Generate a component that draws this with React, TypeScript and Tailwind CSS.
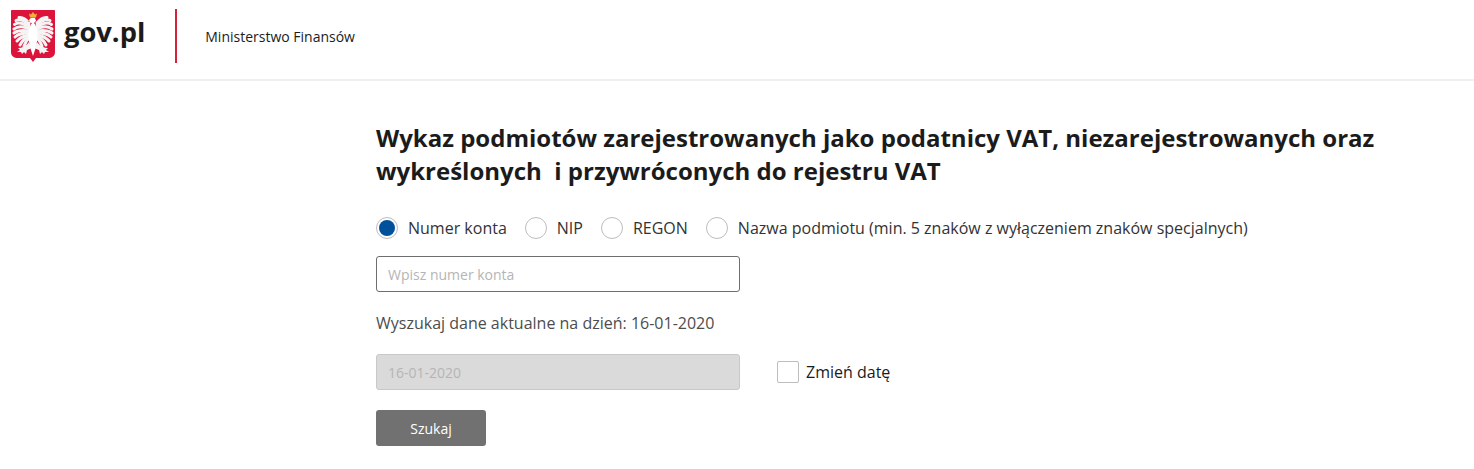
import React from "react";

// wing feathers, drawn from the shoulder outwards (left wing, the right one is mirrored)
const feathers = [
  "M18 13C14 8 11 7 8 7.500",
  "M18 15C13 10 8 9 5 10.500",
  "M18 17C12 13 7 12 3.500 14.500",
  "M18 19C12 16 7 16 3 19",
  "M18 21C12 20 7 20 3 23",
  "M18 23C13 23 8 23 4 27",
  "M18 25C13 26 9 27 6 31",
  "M18 27C14 28 11 31 9 35",
  "M18 28C16 30 14 33 13 36",
];

const Eagle = () => (
  <svg width="44" height="52" viewBox="0 0 44 52" className="shrink-0">
    {/* shield */}
    <path d="M0 1C0 0.4 0.4 0 1 0H43C43.6 0 44 0.4 44 1V42C44 46 41 48 37 48H25L22 52L19 48H7C3 48 0 46 0 42Z" fill="#dc143c" />
    {/* wings */}
    <g stroke="#f4f4f4" strokeWidth="3" strokeLinecap="round" fill="none">
      {feathers.map((d) => (
        <path key={d} d={d} />
      ))}
      <g transform="matrix(-1 0 0 1 44 0)">
        {feathers.map((d) => (
          <path key={d} d={d} />
        ))}
      </g>
    </g>
    {/* body and head */}
    <path d="M18 11C18 8 21 7 24 8L25 11L23 13C26 17 27 23 26.500 29L25.500 34L28 40L24.500 38.500L22 46L19.500 38.500L16 40L18.500 34L17.500 29C17 23 18 17 21 13C19.500 13 18.500 12 18 11Z" fill="#ffffff" />
    {/* legs */}
    <path d="M18 32C15 36 11 38 7 38L9 40L6 42L10 42L11 44L13 42L15 44L16 40L20 37Z" fill="#f4f4f4" />
    <path d="M26 32C29 36 33 38 37 38L35 40L38 42L34 42L33 44L31 42L29 44L28 40L24 37Z" fill="#f4f4f4" />
    {/* crown and beak */}
    <path d="M19 7.500L18 3.500L20 4.500L22 2L24 4.500L26 3.500L25 7.500Z" fill="#f2b233" />
    <path d="M18.500 10C17.500 10.500 17 11 16.500 12L19 12Z" fill="#f2b233" />
  </svg>
);

const Radio = ({ label, checked }: { label: string; checked?: boolean }) => (
  <label className="flex items-center gap-[10px]">
    <span className="flex h-[22px] w-[22px] items-center justify-center rounded-full border border-[#bdbdbd] bg-white">
      {checked && <span className="h-[16px] w-[16px] rounded-full bg-[#00509b]" />}
    </span>
    <span>{label}</span>
  </label>
);

export default function App() {
  return (
    <div className="h-[469px] overflow-hidden bg-white font-['Open_Sans',sans-serif] text-[#1b1b1b]">
      <header className="flex h-[81px] border-b-2 border-[#f0f0f0] pl-[11px]">
        <div className="flex h-[63px] items-start pt-[10px]">
          <Eagle />
          <span className="ml-[9px] mt-[3px] text-[27.3px] leading-[38px] font-bold">gov.pl</span>
        </div>
        <div className="ml-[30px] mt-[9px] h-[54px] w-[2px] bg-[#d4213d]" />
        <div className="ml-[28px] mt-[27px] text-[14px] leading-[20px]">Ministerstwo Finansów</div>
      </header>

      <main className="pl-[376px] pt-[40px]">
        <h1 className="w-[1040px] text-[24px] leading-[33px] font-bold">
          Wykaz podmiotów zarejestrowanych jako podatnicy VAT, niezarejestrowanych oraz
          <br />
          wykreślonych{"\u00A0 "}i przywróconych do rejestru VAT
        </h1>

        <div className="mt-[29px] flex items-center gap-[18px] text-[16px] leading-[24px] text-[#333]">
          <Radio label="Numer konta" checked />
          <Radio label="NIP" />
          <Radio label="REGON" />
          <Radio label="Nazwa podmiotu (min. 5 znaków z wyłączeniem znaków specjalnych)" />
        </div>

        <input
          placeholder="Wpisz numer konta"
          className="mt-[16px] block h-[36px] w-[364px] rounded-[3px] border border-[#6e6e6e] px-[11px] text-[14px] placeholder:text-[#b5b5b5]"
        />

        <p className="mt-[19px] text-[16px] leading-[24px] text-[#4d4d4d]">
          Wyszukaj dane aktualne na dzień: 16-01-2020
        </p>

        <div className="mt-[19px] flex items-center">
          <div className="flex h-[36px] w-[364px] items-center rounded-[3px] border border-[#c8c8c8] bg-[#dadada] px-[11px] text-[14px] text-[#b5b5b5]">
            16-01-2020
          </div>
          <span className="ml-[37px] h-[22px] w-[22px] rounded-[2px] border border-[#bdbdbd] bg-white" />
          <span className="ml-[7px] text-[16px] leading-[24px]">Zmień datę</span>
        </div>

        <button className="mt-[20px] block h-[36px] w-[110px] rounded-[3px] bg-[#717171] text-[14px] text-white">
          Szukaj
        </button>
      </main>
    </div>
  );
}
